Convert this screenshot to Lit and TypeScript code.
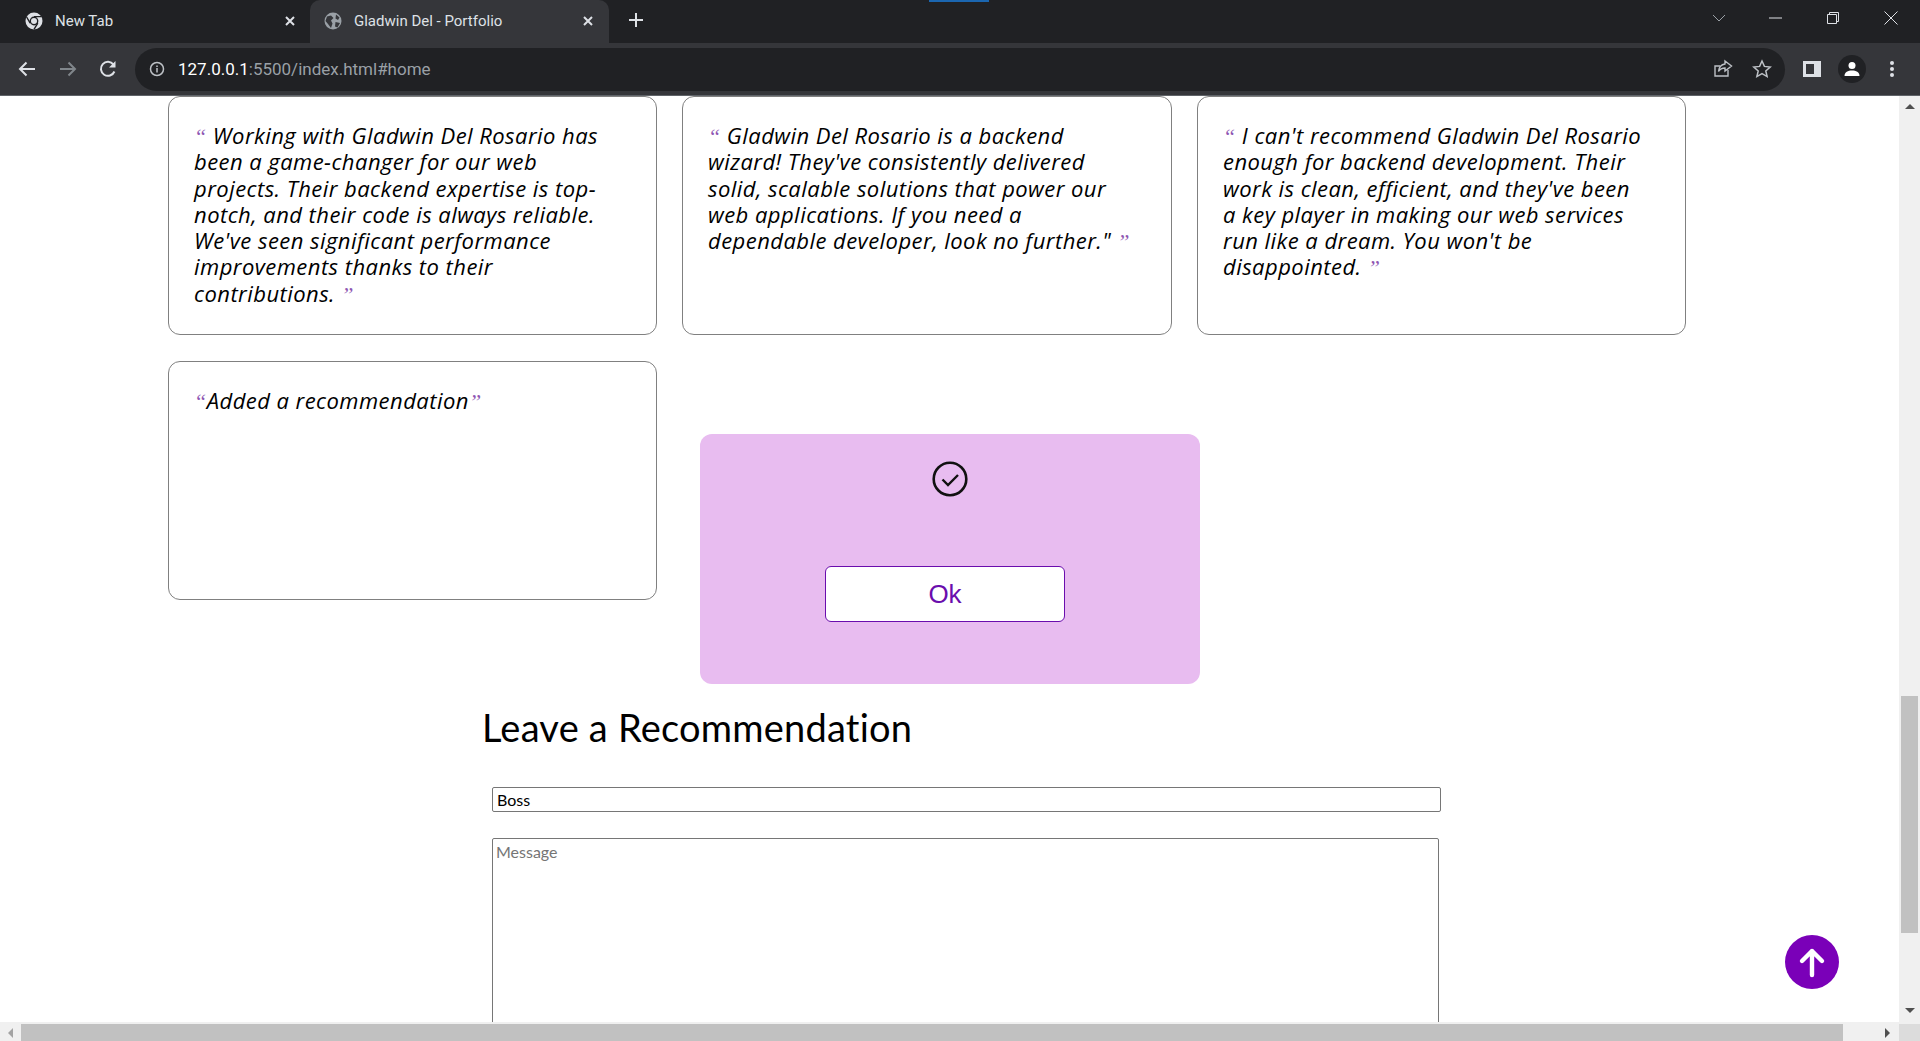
import { LitElement, html, css, svg } from "lit";
import { customElement } from "lit/decorators.js";

const TESTIMONIALS = [
  " Working with Gladwin Del Rosario has been a game-changer for our web projects. Their backend expertise is top-notch, and their code is always reliable. We've seen significant performance improvements thanks to their contributions. ",
  " Gladwin Del Rosario is a backend wizard! They've consistently delivered solid, scalable solutions that power our web applications. If you need a dependable developer, look no further.\" ",
  " I can't recommend Gladwin Del Rosario enough for backend development. Their work is clean, efficient, and they've been a key player in making our web services run like a dream. You won't be disappointed. ",
  "Added a recommendation",
];

const icon = (w: number, body: unknown, box = 24) =>
  html`<svg width=${w} height=${w} viewBox="0 0 ${box} ${box}">${body}</svg>`;

@customElement("app-root")
export class AppRoot extends LitElement {
  static styles = css`
    :host {
      display: block;
      width: 1920px;
      height: 1041px;
      overflow: hidden;
      background: #fff;
      font-family: "Lato", sans-serif;
    }

    .window {
      display: flex;
      flex-direction: column;
      height: 1041px;
    }

    /* browser chrome */
    .tabstrip {
      display: flex;
      align-items: flex-end;
      height: 43px;
      background: #202124;
      flex: none;
      position: relative;
      font-family: "Roboto", sans-serif;
      font-size: 15px;
      color: #dee1e6;
    }

    .media-mark {
      position: absolute;
      left: 929px;
      top: 0;
      width: 60px;
      height: 2px;
      background: #1b66b0;
    }

    .tab {
      display: flex;
      align-items: center;
      width: 310px;
      height: 43px;
      padding: 0 14px 2px 25px;
      box-sizing: border-box;
      gap: 12px;
    }

    .tab.active {
      width: 299px;
      background: #35363a;
      border-radius: 10px 10px 0 0;
      padding: 0 15px 2px 14px;
    }

    .tab span {
      flex: 1;
      white-space: nowrap;
    }

    .tab svg,
    .toolbar svg,
    .caption svg {
      display: block;
      flex: none;
    }

    .newtab {
      margin: 0 0 5px 19px;
      height: 37px;
      display: flex;
      align-items: center;
    }

    .caption {
      margin-left: auto;
      display: flex;
      align-items: center;
      height: 36px;
      align-self: flex-start;
    }

    .caption div {
      width: 58px;
      display: flex;
      justify-content: center;
    }

    .caption div:first-child {
      margin-right: -2px;
    }

    .toolbar {
      display: flex;
      align-items: center;
      height: 53px;
      flex: none;
      background: #35363a;
      box-sizing: border-box;
      padding: 0 0 0 15px;
      border-bottom: 1px solid #5f6368;
    }

    .nav {
      display: flex;
      align-items: center;
      gap: 16.5px;
    }

    .omnibox {
      display: flex;
      align-items: center;
      width: 1650px;
      height: 43px;
      margin-left: 15px;
      padding: 0 13px 0 14px;
      box-sizing: border-box;
      border-radius: 22px;
      background: #202124;
      font-family: "Roboto", sans-serif;
      font-size: 17px;
      color: #9aa0a6;
    }

    .url {
      margin-left: 13px;
      flex: 1;
      white-space: nowrap;
    }

    .url b {
      font-weight: 400;
      color: #fff;
    }

    .omni-actions {
      display: flex;
      align-items: center;
      gap: 19px;
    }

    .tools {
      display: flex;
      align-items: center;
      margin-left: 17px;
      gap: 16px;
    }

    .avatar {
      width: 28px;
      height: 28px;
      border-radius: 50%;
      background: #202124;
      display: flex;
      align-items: center;
      justify-content: center;
    }

    /* page viewport */
    .viewport {
      flex: 1;
      min-height: 0;
      display: grid;
      grid-template-columns: 1fr 21px;
      grid-template-rows: 1fr 19px;
      position: relative;
    }

    .page {
      overflow: hidden;
      padding-left: 168px;
      box-sizing: border-box;
      min-width: 0;
      min-height: 0;
    }

    .cards {
      display: grid;
      grid-template-columns: 489px 490px 489px;
      grid-auto-rows: 239px;
      column-gap: 25px;
      row-gap: 26px;
    }

    .card {
      box-sizing: border-box;
      border: 1px solid #808080;
      border-radius: 12px;
      padding: 25px 37px 0 25px;
      font-family: "Open Sans", sans-serif;
      font-size: 22px;
      letter-spacing: 0.45px;
      line-height: 26.3px;
      font-style: italic;
      color: #000;
    }

    .q {
      font-family: "Liberation Serif", serif;
      line-height: 0;
      color: #6a1b9a;
      opacity: 0.75;
    }

    .section {
      margin: 0 0 0 314px;
      width: 960px;
    }

    h2 {
      margin: 0;
      padding-top: 104px;
      font-size: 38px;
      letter-spacing: 0.22px;
      line-height: 46px;
      font-weight: 400;
      color: #000;
    }

    .fields {
      padding: 37px 0 0 10px;
      display: flex;
      flex-direction: column;
      gap: 26px;
      align-items: flex-start;
    }

    input,
    textarea {
      display: block;
      margin: 0;
      box-sizing: border-box;
      font: 16px "Lato", sans-serif;
      color: #000;
      background: #fff;
      border: 1px solid #767676;
      border-radius: 2px;
      outline: none;
    }

    input {
      width: 949px;
      height: 25px;
      padding: 1px 4px;
    }

    textarea {
      width: 947px;
      height: 300px;
      padding: 3px 3px;
      resize: none;
    }

    textarea::placeholder {
      color: #757575;
    }

    /* overlays */
    .modal {
      position: absolute;
      left: 700px;
      top: 338px;
      width: 500px;
      height: 250px;
      background: #e8bcf0;
      border-radius: 12px;
      display: flex;
      flex-direction: column;
      align-items: center;
    }

    .modal svg {
      margin-top: 27px;
      display: block;
    }

    .ok {
      margin: 69px 10px 0 0;
      width: 240px;
      height: 56px;
      box-sizing: border-box;
      background: #fff;
      color: #6a0dad;
      border: 1px solid #6a0dad;
      border-radius: 6px;
      font: 26px "Liberation Sans", sans-serif;
      padding: 0;
    }

    .to-top {
      position: absolute;
      left: 1785px;
      top: 839px;
      width: 54px;
      height: 54px;
      border-radius: 50%;
      background: #7a00b8;
      display: flex;
      align-items: center;
      justify-content: center;
    }

    /* scrollbars */
    .vbar,
    .hbar {
      background: #f0f0f0;
      position: relative;
    }

    .vbar {
      grid-column: 2;
      grid-row: 1;
      display: flex;
      flex-direction: column;
      align-items: center;
      justify-content: space-between;
      padding: 8px 0 9px;
      box-sizing: border-box;
    }

    .hbar {
      grid-column: 1;
      grid-row: 2;
      display: flex;
      align-items: center;
      justify-content: space-between;
      padding: 2px 9px 0 8px;
      box-sizing: border-box;
    }

    .vthumb {
      position: absolute;
      left: 2px;
      top: 600px;
      width: 17px;
      height: 237px;
      background: #c1c1c1;
    }

    .hthumb {
      position: absolute;
      left: 21px;
      top: 2px;
      width: 1822px;
      height: 17px;
      background: #c1c1c1;
    }

    .corner {
      grid-column: 2;
      grid-row: 2;
      background: #dcdcdc;
      border-top: 2px solid #f0f0f0;
    }

    .arrow {
      width: 0;
      height: 0;
      border: 5px solid transparent;
    }

    .up {
      border-top: 0;
      border-bottom-color: #505050;
    }

    .down {
      border-bottom: 0;
      border-top-color: #505050;
    }

    .left {
      border-left: 0;
      border-right-color: #a3a3a3;
    }

    .right {
      border-right: 0;
      border-left-color: #505050;
    }
  `;

  private _chromeLogo() {
    return icon(
      18,
      svg`<circle cx="9" cy="9" r="8.5" fill="#dee1e6"/>
        <circle cx="9" cy="9" r="4.4" fill="#202124"/>
        <circle cx="9" cy="9" r="3" fill="#dee1e6"/>
        <path d="M9 4.6h7.4M5.2 11.2 1.6 5M12.8 11.2 9 17.4" stroke="#202124" stroke-width="1.4" fill="none"/>`,
      18
    );
  }

  private _globe() {
    return icon(
      18,
      svg`<circle cx="9" cy="9" r="8.5" fill="#9aa0a6"/>
        <path d="M3 4.5 7 3.5 9.5 6 7 8.5 8.5 11.5 7 16 4 12 1.5 9zM12 2.5l3.5 3-1.5 2.5-2.5-1.5zM11.5 10l4.5 1-2.5 4.5-2.5-1z" fill="#35363a"/>`,
      18
    );
  }

  private _close() {
    return icon(
      12,
      svg`<path d="M2 2l8 8M10 2l-8 8" stroke="#dee1e6" stroke-width="2"/>`,
      12
    );
  }

  private _card(text: string) {
    return html`<div class="card"><span class="q">“</span>${text}<span class="q">”</span></div>`;
  }

  render() {
    return html`
      <div class="window">
        <div class="tabstrip">
          <div class="media-mark"></div>
          <div class="tab">
            ${this._chromeLogo()}<span>New Tab</span>${this._close()}
          </div>
          <div class="tab active">
            ${this._globe()}<span>Gladwin Del - Portfolio</span>${this._close()}
          </div>
          <div class="newtab">
            ${icon(
              16,
              svg`<path d="M8 1v14M1 8h14" stroke="#dee1e6" stroke-width="2"/>`,
              16
            )}
          </div>
          <div class="caption">
            <div>
              ${icon(
                14,
                svg`<path d="M1 4l6 6 6-6" stroke="#9aa0a6" stroke-width="1" fill="none"/>`,
                14
              )}
            </div>
            <div>
              ${icon(14, svg`<path d="M1 7h13" stroke="#dee1e6" stroke-width="1"/>`, 14)}
            </div>
            <div>
              ${icon(
                14,
                svg`<path d="M1.5 3.5h9v9h-9zM3.5 3.5v-2h9v9h-2" stroke="#dee1e6" stroke-width="1" fill="none"/>`,
                14
              )}
            </div>
            <div>
              ${icon(
                14,
                svg`<path d="M.5.5l13 13M13.500.5l-13 13" stroke="#dee1e6" stroke-width="1"/>`,
                14
              )}
            </div>
          </div>
        </div>

        <div class="toolbar">
          <div class="nav">
            ${icon(
              24,
              svg`<path d="M20 12H5M11.500 5.500 5 12l6.500 6.500" stroke="#dee1e6" stroke-width="2" fill="none"/>`
            )}
            ${icon(
              24,
              svg`<path d="M4 12h15M12.500 5.500 19 12l-6.500 6.500" stroke="#80868b" stroke-width="2" fill="none"/>`
            )}
            ${icon(
              24,
              svg`<path d="M18.400 14.500A7 7 0 1 1 17.500 7.600" stroke="#dee1e6" stroke-width="2" fill="none"/><path d="M19.500 4v6.500H13z" fill="#dee1e6"/>`
            )}
          </div>
          <div class="omnibox">
            ${icon(
              16,
              svg`<circle cx="8" cy="8" r="6.500" stroke="#bdc1c6" stroke-width="1.500" fill="none"/><path d="M8 7v4.500M8 4.500v1.500" stroke="#bdc1c6" stroke-width="1.500"/>`,
              16
            )}
            <div class="url"><b>127.0.0.1</b>:5500/index.html#home</div>
            <div class="omni-actions">
              ${icon(
                20,
                svg`<path d="M15 11v6H2V7h5" stroke="#bdc1c6" stroke-width="1.400" fill="none"/><path d="M12 2l6.500 5-6.500 5V9c-3 0-5 1-6.500 3.500C6 8 8.500 5.500 12 5z" stroke="#bdc1c6" stroke-width="1.400" fill="none"/>`,
                20
              )}
              ${icon(
                20,
                svg`<path d="M10 2l2.400 5.400 5.800.6-4.400 3.900 1.300 5.700L10 14.700l-5.100 2.900 1.300-5.700L1.800 8l5.800-.6z" stroke="#bdc1c6" stroke-width="1.500" fill="none"/>`,
                20
              )}
            </div>
          </div>
          <div class="tools">
            ${icon(
              20,
              svg`<path d="M1 2h18v16H1z" fill="#dee1e6"/><path d="M4 5h8v10H4z" fill="#35363a"/>`,
              20
            )}
            <div class="avatar">
              ${icon(
                18,
                svg`<circle cx="9" cy="5.500" r="3.500" fill="#fff"/><path d="M1.500 16c0-4 3.500-5.500 7.500-5.500s7.500 1.500 7.500 5.500z" fill="#fff"/>`,
                18
              )}
            </div>
            ${icon(
              20,
              svg`<circle cx="10" cy="4" r="2" fill="#dee1e6"/><circle cx="10" cy="10" r="2" fill="#dee1e6"/><circle cx="10" cy="16" r="2" fill="#dee1e6"/>`,
              20
            )}
          </div>
        </div>

        <div class="viewport">
          <div class="page">
            <div class="cards">${TESTIMONIALS.map((t) => this._card(t))}</div>
            <div class="section">
              <h2>Leave a Recommendation</h2>
              <div class="fields">
                <input type="text" .value=${"Boss"} />
                <textarea placeholder="Message"></textarea>
              </div>
            </div>
          </div>
          <div class="vbar">
            <div class="arrow up"></div>
            <div class="vthumb"></div>
            <div class="arrow down"></div>
          </div>
          <div class="hbar">
            <div class="arrow left"></div>
            <div class="hthumb"></div>
            <div class="arrow right"></div>
          </div>
          <div class="corner"></div>

          <div class="modal">
            ${icon(
              36,
              svg`<circle cx="18" cy="18" r="16.300" stroke="#111" stroke-width="2.600" fill="none"/><path d="M10.500 18.500l5.500 5.500 10-10" stroke="#111" stroke-width="2.400" fill="none"/>`,
              36
            )}
            <button class="ok">Ok</button>
          </div>

          <div class="to-top">
            ${icon(
              34,
              svg`<path d="M17 30V6M7 16 17 6l10 10" stroke="#fff" stroke-width="4.400" stroke-linecap="round" stroke-linejoin="round" fill="none"/>`,
              34
            )}
          </div>
        </div>
      </div>
    `;
  }
}
